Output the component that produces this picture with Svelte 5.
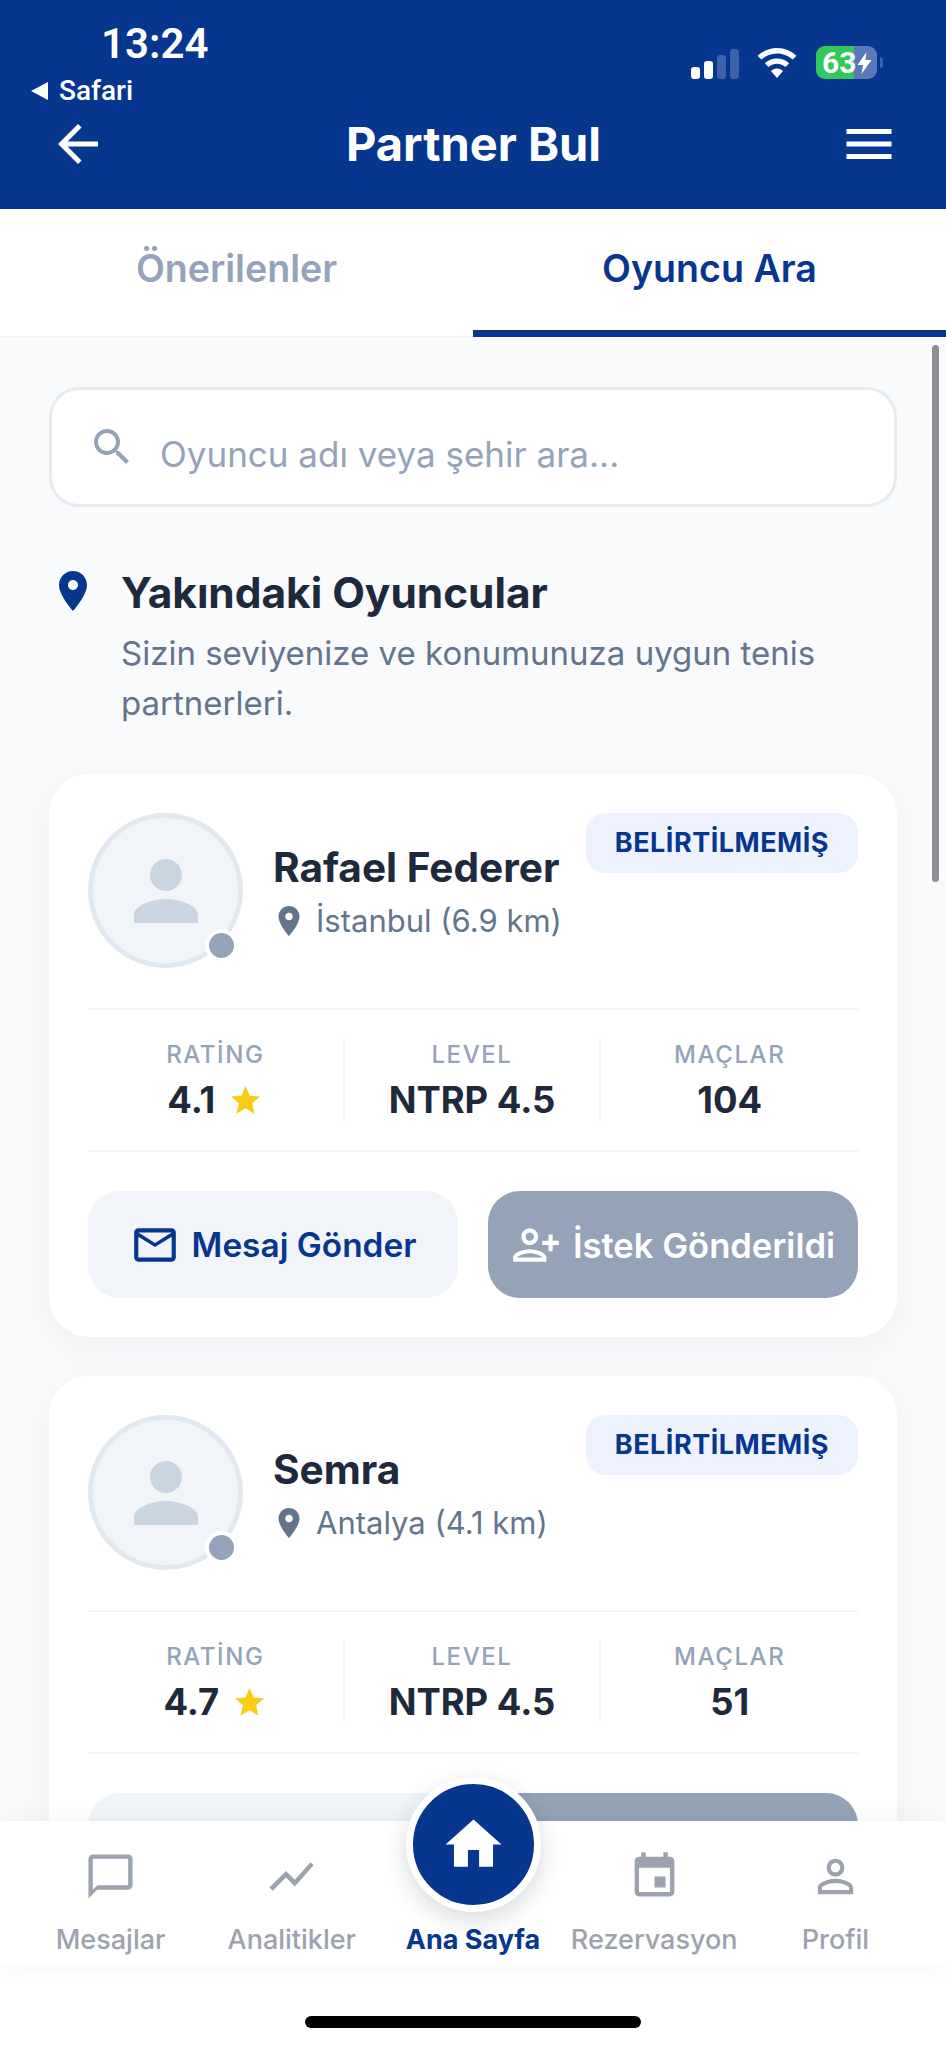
<script>
  const players = [
    { name: 'Rafael Federer', place: 'İstanbul (6.9 km)', rating: '4.1', matches: '104' },
    { name: 'Semra', place: 'Antalya (4.1 km)', rating: '4.7', matches: '51' }
  ];

  const tabs = [
    { label: 'Mesajlar', d: 'M20 2H4c-1.1 0-2 .9-2 2v18l4-4h14c1.1 0 2-.9 2-2V4c0-1.1-.9-2-2-2zm0 14H6l-2 2V4h16v12z' },
    { label: 'Analitikler', d: 'M3.5 18.49l6-6.01 4 4L22 6.92l-1.41-1.41-7.09 7.97-4-4L2 16.99z' },
    { label: 'Ana Sayfa', active: true },
    { label: 'Rezervasyon', d: 'M17 12h-5v5h5v-5zM16 1v2H8V1H6v2H5c-1.11 0-1.99.9-1.99 2L3 19c0 1.1.89 2 2 2h14c1.1 0 2-.9 2-2V5c0-1.1-.9-2-2-2h-1V1h-2zm3 18H5V8h14v11z' },
    { label: 'Profil', d: 'M12 5.9c1.16 0 2.1.94 2.1 2.1s-.94 2.1-2.1 2.1S9.9 9.16 9.9 8s.94-2.1 2.1-2.1m0 9c2.97 0 6.1 1.46 6.1 2.1v1.1H5.9V17c0-.64 3.13-2.1 6.1-2.1M12 4C9.79 4 8 5.79 8 8s1.79 4 4 4 4-1.79 4-4-1.79-4-4-4zm0 9c-2.67 0-8 1.34-8 4v3h16v-3c0-2.66-5.33-4-8-4z' }
  ];

  const pin = 'M12 2C8.13 2 5 5.13 5 9c0 5.25 7 13 7 13s7-7.75 7-13c0-3.87-3.13-7-7-7zm0 9.5c-1.38 0-2.5-1.12-2.5-2.5s1.12-2.5 2.5-2.5 2.5 1.12 2.5 2.5-1.12 2.5-2.5 2.5z';
</script>

<div class="page">
  <header>
    <div class="status">
      <div class="clock">
        <div class="time">13:24</div>
        <div class="back-app"><span class="tri"></span>Safari</div>
      </div>
      <div class="indicators">
        <div class="signal">
          <i class="b1"></i><i class="b2"></i><i class="b3"></i><i class="b4"></i>
        </div>
        <svg class="wifi" viewBox="0 0 40 30" fill="#fff">
          <path d="M20 0C12.5 0 5.7 3 .6 7.8l3.7 3.8C8.4 7.8 13.9 5.4 20 5.4s11.6 2.4 15.7 6.2l3.7-3.8C34.3 3 27.5 0 20 0z" />
          <path d="M20 10.4c-4.7 0-9 1.9-12.2 4.9l3.7 3.8c2.2-2.1 5.2-3.4 8.5-3.4s6.3 1.3 8.5 3.4l3.7-3.8c-3.2-3-7.5-4.9-12.2-4.9z" />
          <path d="M20 20.6c-2.3 0-4.5.9-6 2.4l6 7 6-7c-1.5-1.5-3.7-2.4-6-2.4z" />
        </svg>
        <div class="battery">
          <div class="cell">
            <span class="level"></span>
            <span class="pct">63</span>
            <svg class="bolt" viewBox="0 0 14 22" fill="#fff"><path d="M9 0L0 13h5.5L4 22l10-14H8z" /></svg>
          </div>
          <span class="nub"></span>
        </div>
      </div>
    </div>
    <div class="topbar">
      <svg class="top-icon" viewBox="0 0 24 24" fill="#fff"><path d="M20 11H7.83l5.59-5.59L12 4l-8 8 8 8 1.41-1.41L7.83 13H20v-2z" /></svg>
      <h1>Partner Bul</h1>
      <svg class="top-icon" viewBox="0 0 24 24" fill="#fff"><path d="M3 18h18v-2H3v2zm0-5h18v-2H3v2zm0-7v2h18V6H3z" /></svg>
    </div>
  </header>

  <nav class="tabs">
    <div class="tab">Önerilenler</div>
    <div class="tab active">Oyuncu Ara</div>
  </nav>

  <main>
    <span class="scrollbar"></span>
    <div class="search">
      <svg viewBox="0 0 24 24" fill="#94a3b8"><path d="M15.5 14h-.79l-.28-.27C15.41 12.59 16 11.11 16 9.5 16 5.91 13.09 3 9.5 3S3 5.91 3 9.5 5.91 16 9.5 16c1.61 0 3.09-.59 4.23-1.57l.27.28v.79l5 4.99L20.49 19l-4.99-5zm-6 0C7.01 14 5 11.99 5 9.5S7.01 5 9.5 5 14 7.01 14 9.5 11.99 14 9.5 14z" /></svg>
      <span>Oyuncu adı veya şehir ara...</span>
    </div>

    <section class="intro">
      <svg viewBox="0 0 24 24" fill="#07368f"><path d={pin} /></svg>
      <div>
        <h2>Yakındaki Oyuncular</h2>
        <p>Sizin seviyenize ve konumunuza uygun tenis partnerleri.</p>
      </div>
    </section>

    {#each players as p}
      <article class="card">
        <div class="top">
          <div class="avatar">
            <svg viewBox="0 0 24 24" fill="#cbd5e1"><path d="M12 12c2.21 0 4-1.79 4-4s-1.79-4-4-4-4 1.79-4 4 1.79 4 4 4zm0 2c-2.67 0-8 1.34-8 4v2h16v-2c0-2.66-5.33-4-8-4z" /></svg>
            <span class="dot"></span>
          </div>
          <div class="info">
            <div class="name">{p.name}</div>
            <div class="place">
              <svg viewBox="0 0 24 24" fill="#64748b"><path d={pin} /></svg>
              {p.place}
            </div>
          </div>
          <div class="badge">BELİRTİLMEMİŞ</div>
        </div>

        <div class="stats">
          <div class="stat">
            <div class="label">RATİNG</div>
            <div class="value">
              {p.rating}
              <svg viewBox="0 0 24 24" fill="#facc15"><path d="M12 17.27L18.18 21l-1.64-7.03L22 9.24l-7.19-.61L12 2 9.19 8.63 2 9.24l5.46 4.73L5.82 21z" /></svg>
            </div>
          </div>
          <div class="stat">
            <div class="label">LEVEL</div>
            <div class="value">NTRP 4.5</div>
          </div>
          <div class="stat">
            <div class="label">MAÇLAR</div>
            <div class="value">{p.matches}</div>
          </div>
        </div>

        <div class="actions">
          <button class="msg">
            <svg viewBox="0 0 24 24" fill="currentColor"><path d="M20 4H4c-1.1 0-1.99.9-1.99 2L2 18c0 1.1.9 2 2 2h16c1.1 0 2-.9 2-2V6c0-1.1-.9-2-2-2zm0 14H4V8l8 5 8-5v10zm-8-7L4 6h16l-8 5z" /></svg>
            Mesaj Gönder
          </button>
          <button class="sent">
            <svg class="flip" viewBox="0 0 24 24" fill="currentColor"><path d="M15 12c2.21 0 4-1.79 4-4s-1.79-4-4-4-4 1.79-4 4 1.79 4 4 4zm0-6c1.1 0 2 .9 2 2s-.9 2-2 2-2-.9-2-2 .9-2 2-2zm0 8c-2.67 0-8 1.34-8 4v2h16v-2c0-2.66-5.33-4-8-4zm-6 4c.22-.72 3.31-2 6-2 2.7 0 5.8 1.29 6 2H9zm-3-3v-3h3v-2H6V7H4v3H1v2h3v3h2z" /></svg>
            İstek Gönderildi
          </button>
        </div>
      </article>
    {/each}
  </main>

  <footer>
    {#each tabs as t}
      <div class="item" class:active={t.active}>
        {#if t.active}
          <div class="home">
            <svg viewBox="0 0 24 24" fill="#fff"><path d="M10 20v-6h4v6h5v-8h3L12 3 2 12h3v8z" /></svg>
          </div>
        {:else}
          <svg viewBox="0 0 24 24" fill="#9ca3af"><path d={t.d} /></svg>
        {/if}
        <span>{t.label}</span>
      </div>
    {/each}
  </footer>

  <div class="safe"><span class="indicator"></span></div>
</div>

<style>
  :global(body) {
    margin: 0;
    background: #fff;
  }

  .page {
    width: 946px;
    height: 2048px;
    display: flex;
    flex-direction: column;
    overflow: hidden;
    font-family: Inter, "Noto Sans", sans-serif;
    color: #1e293b;
  }

  header {
    height: 209px;
    flex-shrink: 0;
    background: #07368f;
    color: #fff;
    box-sizing: border-box;
    padding-top: 20px;
  }

  .status {
    display: flex;
    justify-content: space-between;
    align-items: flex-start;
    padding: 0 63px 0 31px;
  }

  .time {
    margin-left: 70px;
    font-size: 42px;
    line-height: 48px;
    font-weight: 600;
    font-family: Roboto, Inter, sans-serif;
  }

  .back-app {
    display: flex;
    align-items: center;
    gap: 11px;
    margin-top: 8px;
    font-size: 28px;
    line-height: 30px;
    font-family: Roboto, Inter, sans-serif;
    font-weight: 500;
  }

  .tri {
    width: 0;
    height: 0;
    border-top: 9px solid transparent;
    border-bottom: 9px solid transparent;
    border-right: 17px solid #fff;
  }

  .indicators {
    display: flex;
    align-items: center;
    margin-top: 26px;
    height: 33px;
  }

  .signal {
    display: flex;
    align-items: flex-end;
    gap: 4px;
    height: 30px;
    margin-top: 2px;
  }

  .signal i {
    width: 9px;
    border-radius: 3px;
    background: #fff;
  }

  .signal .b1 { height: 12px; }
  .signal .b2 { height: 18px; }
  .signal .b3 { height: 24px; background: #3c62aa; }
  .signal .b4 { height: 30px; background: #3c62aa; }

  .wifi {
    width: 40px;
    height: 30px;
    margin-left: 18px;
  }

  .battery {
    display: flex;
    align-items: center;
    margin-left: 19px;
  }

  .cell {
    position: relative;
    width: 61px;
    height: 33px;
    border-radius: 9px;
    overflow: hidden;
    background: #5b79b8;
    display: flex;
    align-items: center;
  }

  .level {
    position: absolute;
    left: 0;
    top: 0;
    bottom: 0;
    width: 38px;
    background: #34c759;
  }

  .pct {
    position: relative;
    margin-left: 6px;
    font-size: 30px;
    font-weight: 700;
    line-height: 33px;
    font-family: Roboto, Inter, sans-serif;
  }

  .bolt {
    position: relative;
    width: 15px;
    height: 22px;
    margin-left: 1px;
  }

  .nub {
    width: 3px;
    height: 11px;
    margin-left: 3px;
    border-radius: 0 3px 3px 0;
    background: #3c62aa;
  }

  .topbar {
    display: flex;
    align-items: center;
    justify-content: space-between;
    height: 66px;
    margin-top: 5px;
    padding: 0 47px 0 48px;
  }

  .top-icon {
    width: 60px;
    height: 60px;
  }

  h1 {
    margin: 0;
    font-size: 47px;
    font-weight: 700;
    line-height: 66px;
  }

  .tabs {
    display: flex;
    height: 128px;
    flex-shrink: 0;
    background: #fff;
  }

  .tab {
    flex: 1;
    box-sizing: border-box;
    display: flex;
    align-items: center;
    justify-content: center;
    font-size: 37.6px;
    font-weight: 600;
    color: #94a3b8;
    border-bottom: 1px solid #eef1f5;
    padding-bottom: 8px;
  }

  .tab.active {
    color: #07368f;
    border-bottom: 7px solid #07368f;
    padding-bottom: 2px;
  }

  main {
    position: relative;
    flex: 1;
    min-height: 0;
    overflow: hidden;
    background: #f8fafc;
    padding: 50px 49px 0;
  }

  .scrollbar {
    position: absolute;
    right: 7px;
    top: 8px;
    width: 7px;
    height: 537px;
    border-radius: 4px;
    background: #8d8f93;
  }

  .search {
    display: flex;
    align-items: center;
    height: 120px;
    box-sizing: border-box;
    border: 3px solid #e6ebf1;
    border-radius: 30px;
    background: #fff;
    padding-left: 36px;
    font-size: 35px;
    color: #94a3b8;
  }

  .search svg {
    width: 48px;
    height: 48px;
    margin-right: 24px;
    flex-shrink: 0;
  }

  .search span {
    padding-top: 13px;
  }

  .intro {
    display: flex;
    gap: 24px;
    margin-top: 60px;
  }

  .intro svg {
    width: 48px;
    height: 48px;
    flex-shrink: 0;
  }

  h2 {
    margin: 0;
    font-size: 42.4px;
    line-height: 52px;
    font-weight: 700;
  }

  .intro p {
    margin: 9px 0 0;
    font-size: 33px;
    line-height: 50px;
    color: #64748b;
  }

  .card {
    background: #fff;
    border-radius: 40px;
    padding: 39px;
    margin: 46px 0 39px;
    box-shadow: 0 10px 40px rgba(15, 23, 42, 0.05);
  }

  .card + .card {
    margin-top: 0;
  }

  .top {
    display: flex;
    align-items: center;
    position: relative;
    height: 155px;
  }

  .avatar {
    position: relative;
    width: 155px;
    height: 155px;
    flex-shrink: 0;
    box-sizing: border-box;
    border: 5px solid #e2e8f0;
    border-radius: 50%;
    background: #f1f5f9;
    display: flex;
    align-items: center;
    justify-content: center;
  }

  .avatar svg {
    width: 96px;
    height: 96px;
  }

  .dot {
    position: absolute;
    right: 0;
    bottom: 1px;
    width: 25px;
    height: 25px;
    border: 4px solid #fff;
    border-radius: 50%;
    background: #94a3b8;
  }

  .info {
    margin-left: 30px;
    padding-top: 3px;
  }

  .name {
    font-size: 40.6px;
    line-height: 48px;
    font-weight: 700;
    white-space: nowrap;
  }

  .place {
    display: flex;
    align-items: center;
    margin-top: 9px;
    font-size: 31px;
    line-height: 40px;
    color: #64748b;
    white-space: nowrap;
  }

  .place svg {
    width: 36px;
    height: 36px;
    margin: 0 9px 0 -2px;
  }

  .badge {
    align-self: flex-start;
    margin-left: auto;
    height: 60px;
    line-height: 60px;
    padding: 0 29px;
    border-radius: 20px;
    background: #eef2ff;
    color: #07368f;
    font-size: 27px;
    font-weight: 700;
    letter-spacing: 0.5px;
    white-space: nowrap;
  }

  .stats {
    display: grid;
    grid-template-columns: repeat(3, 1fr);
    margin-top: 40px;
    padding: 29px 0;
    border-top: 2px solid #f1f5f9;
    border-bottom: 2px solid #f1f5f9;
  }

  .stat {
    text-align: center;
    border-right: 2px solid #f1f5f9;
  }

  .stat:last-child {
    border-right: none;
  }

  .label {
    font-size: 24px;
    line-height: 32px;
    font-weight: 500;
    letter-spacing: 1.6px;
    color: #94a3b8;
  }

  .value {
    display: flex;
    align-items: center;
    justify-content: center;
    gap: 13px;
    margin-top: 8px;
    font-size: 36.4px;
    line-height: 42px;
    font-weight: 700;
  }

  .value svg {
    width: 35px;
    height: 35px;
  }

  .actions {
    display: grid;
    grid-template-columns: 1fr 1fr;
    gap: 30px;
    margin-top: 39px;
  }

  button {
    height: 107px;
    border: none;
    border-radius: 32px;
    padding: 0;
    display: flex;
    align-items: center;
    justify-content: center;
    gap: 12px;
    font: 600 33.4px Inter, sans-serif;
    white-space: nowrap;
  }

  button svg {
    width: 50px;
    height: 50px;
    flex-shrink: 0;
  }

  .flip {
    transform: scaleX(-1);
  }

  .msg {
    background: #f1f5f9;
    color: #07368f;
  }

  .sent {
    background: #94a3b8;
    color: #fff;
    font-size: 34.6px;
  }

  footer {
    position: relative;
    display: grid;
    grid-template-columns: repeat(5, 1fr);
    height: 144px;
    flex-shrink: 0;
    padding: 0 20px;
    background: #fff;
    box-shadow: 0 -6px 20px rgba(15, 23, 42, 0.03), 0 8px 20px rgba(15, 23, 42, 0.025);
  }

  .item {
    display: flex;
    flex-direction: column;
    align-items: center;
    justify-content: flex-end;
    padding-bottom: 9px;
    font-size: 27px;
    line-height: 32px;
    color: #9ca3af;
    white-space: nowrap;
    font-weight: 500;
  }

  .item > svg {
    width: 53px;
    height: 53px;
    margin-bottom: 21px;
  }

  .item.active {
    color: #07368f;
    font-weight: 700;
  }

  .home {
    position: absolute;
    top: -44px;
    left: 50%;
    margin-left: -67.5px;
    width: 135px;
    height: 135px;
    box-sizing: border-box;
    border: 7px solid #fff;
    border-radius: 50%;
    background: #07368f;
    box-shadow: 0 8px 24px rgba(15, 23, 42, 0.16);
    display: flex;
    align-items: center;
    justify-content: center;
  }

  .home svg {
    width: 67px;
    height: 67px;
  }

  .safe {
    flex: none;
    height: 83px;
    display: flex;
    justify-content: center;
    align-items: flex-start;
  }

  .indicator {
    width: 336px;
    height: 12px;
    margin-top: 51px;
    border-radius: 6px;
    background: #000;
  }
</style>
